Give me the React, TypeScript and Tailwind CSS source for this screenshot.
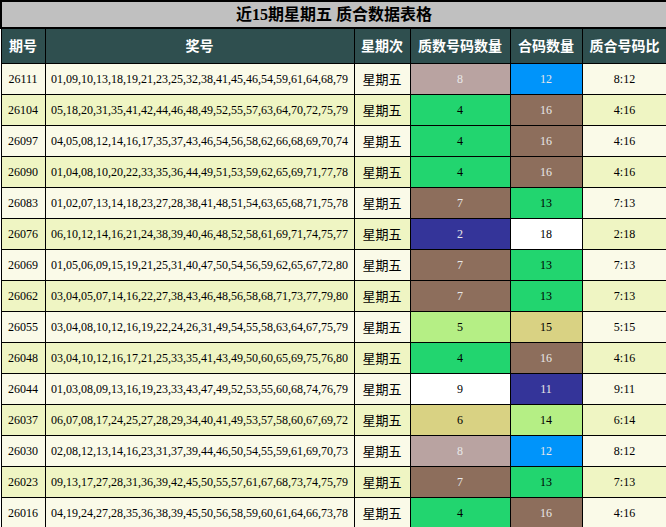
const rows: [string, string, number][] = [
  ["26111", "01,09,10,13,18,19,21,23,25,32,38,41,45,46,54,59,61,64,68,79", 8],
  ["26104", "05,18,20,31,35,41,42,44,46,48,49,52,55,57,63,64,70,72,75,79", 4],
  ["26097", "04,05,08,12,14,16,17,35,37,43,46,54,56,58,62,66,68,69,70,74", 4],
  ["26090", "01,04,08,10,20,22,33,35,36,44,49,51,53,59,62,65,69,71,77,78", 4],
  ["26083", "01,02,07,13,14,18,23,27,28,38,41,48,51,54,63,65,68,71,75,78", 7],
  ["26076", "06,10,12,14,16,21,24,38,39,40,46,48,52,58,61,69,71,74,75,77", 2],
  ["26069", "01,05,06,09,15,19,21,25,31,40,47,50,54,56,59,62,65,67,72,80", 7],
  ["26062", "03,04,05,07,14,16,22,27,38,43,46,48,56,58,68,71,73,77,79,80", 7],
  ["26055", "03,04,08,10,12,16,19,22,24,26,31,49,54,55,58,63,64,67,75,79", 5],
  ["26048", "03,04,10,12,16,17,21,25,33,35,41,43,49,50,60,65,69,75,76,80", 4],
  ["26044", "01,03,08,09,13,16,19,23,33,43,47,49,52,53,55,60,68,74,76,79", 9],
  ["26037", "06,07,08,17,24,25,27,28,29,34,40,41,49,53,57,58,60,67,69,72", 6],
  ["26030", "02,08,12,13,14,16,23,31,37,39,44,46,50,54,55,59,61,69,70,73", 8],
  ["26023", "09,13,17,27,28,31,36,39,42,45,50,55,57,61,67,68,73,74,75,79", 7],
  ["26016", "04,19,24,27,28,35,36,38,39,45,50,56,58,59,60,61,64,66,73,78", 4],
];

const cellColor: Record<number, string> = {
  8: "bg-[#b9a3a1] text-[#e8e8e8]",
  12: "bg-[#0094fa] text-[#e8e8e8]",
  4: "bg-[#22d56f] text-black",
  16: "bg-[#8d6e5c] text-[#e8e8e8]",
  7: "bg-[#8d6e5c] text-[#e8e8e8]",
  13: "bg-[#22d56f] text-black",
  2: "bg-[#343499] text-[#e8e8e8]",
  18: "bg-white text-black",
  5: "bg-[#b5ef85] text-black",
  15: "bg-[#d9d283] text-black",
  9: "bg-white text-black",
  11: "bg-[#343499] text-[#e8e8e8]",
  6: "bg-[#d9d283] text-black",
  14: "bg-[#b5ef85] text-black",
};

export default function App() {
  return (
    <div className="w-[666px] h-[527px] overflow-hidden bg-white" style={{ fontFamily: '"Liberation Serif", "Noto Sans CJK SC", serif' }}>
      <table className="w-[666px] border-collapse table-fixed text-[12px]">
        <colgroup>
          <col className="w-[44px]" />
          <col className="w-[309px]" />
          <col className="w-[56px]" />
          <col className="w-[100px]" />
          <col className="w-[72px]" />
          <col className="w-[85px]" />
        </colgroup>
        <thead>
          <tr className="h-[27px]">
            <th colSpan={6} className="p-0 bg-[#c0c0c0] border-2 border-black text-[16px] font-bold text-black" style={{ fontFamily: '"Liberation Serif", "Noto Sans CJK SC", sans-serif' }}>
              近15期星期五 质合数据表格
            </th>
          </tr>
          <tr className="h-[35px] bg-[#2f4f4f] text-white text-[14px] font-bold" style={{ fontFamily: '"Noto Sans CJK SC", sans-serif' }}>
            {["期号", "奖号", "星期次", "质数号码数量", "合码数量", "质合号码比"].map((h) => (
              <th key={h} className="p-0 border border-black font-bold whitespace-nowrap">{h}</th>
            ))}
          </tr>
        </thead>
        <tbody>
          {rows.map(([id, nums, p], i) => {
            const c = 20 - p;
            const bg = i % 2 === 0 ? "bg-[#fafae8]" : "bg-[#eff5c3]";
            return (
              <tr key={id} className={`h-[31px] ${bg} text-black`}>
                <td className="p-0 border border-black text-center">{id}</td>
                <td className="p-0 border border-black text-center whitespace-nowrap">{nums}</td>
                <td className="p-0 border border-black text-center text-[13px] whitespace-nowrap" style={{ fontFamily: '"Noto Sans CJK SC", sans-serif' }}>星期五</td>
                <td className={`p-0 border border-black text-center ${cellColor[p]}`}>{p}</td>
                <td className={`p-0 border border-black text-center ${cellColor[c]}`}>{c}</td>
                <td className="p-0 border border-black text-center">{p}:{c}</td>
              </tr>
            );
          })}
        </tbody>
      </table>
    </div>
  );
}
